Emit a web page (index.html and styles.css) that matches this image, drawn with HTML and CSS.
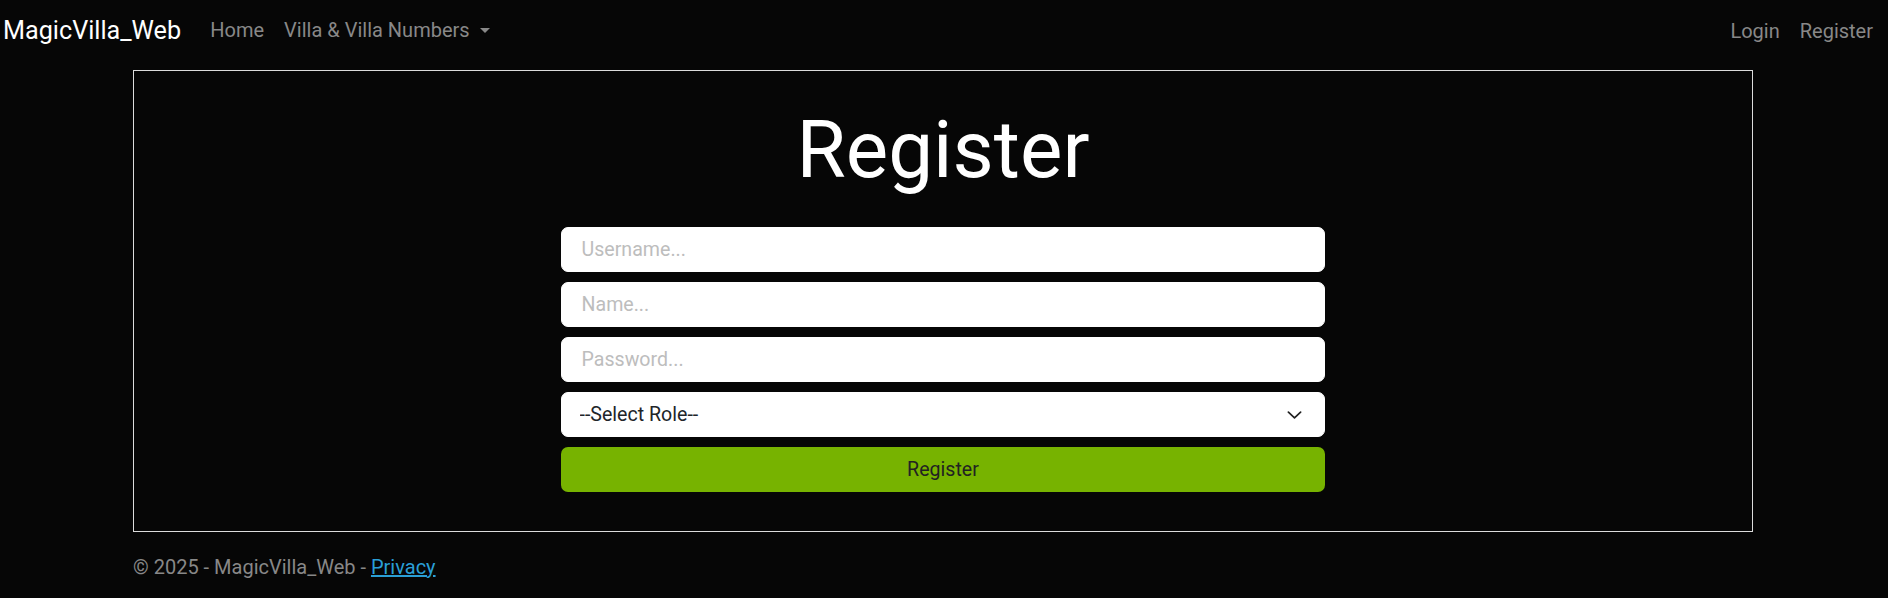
FILE: index.html
```html
<!DOCTYPE html>
<html lang="en">
<head>
<meta charset="utf-8">
<title>Register - MagicVilla_Web</title>
<link rel="stylesheet" href="styles.css">
</head>
<body>
<header class="navbar">
  <div class="nav-left">
    <a class="brand" href="#">MagicVilla_Web</a>
    <a class="nav-link" href="#">Home</a>
    <a class="nav-link dropdown" href="#">Villa &amp; Villa Numbers<span class="caret"></span></a>
  </div>
  <div class="nav-right">
    <a class="nav-link" href="#">Login</a>
    <a class="nav-link" href="#">Register</a>
  </div>
</header>
<main class="panel">
  <h1 class="title">Register</h1>
  <form class="form">
    <input class="field" type="text" placeholder="Username...">
    <input class="field" type="text" placeholder="Name...">
    <input class="field" type="password" placeholder="Password...">
    <select class="field select">
      <option>--Select Role--</option>
      <option>Admin</option>
      <option>Customer</option>
    </select>
    <button class="btn" type="button">Register</button>
  </form>
</main>
<footer class="footer">
  &copy; 2025 - MagicVilla_Web - <a href="#" class="privacy">Privacy</a>
</footer>
</body>
</html>
```
FILE: styles.css
```css
* { box-sizing: border-box; }
html, body { margin: 0; padding: 0; }
body {
  background: #060606;
  color: #888;
  font-family: Roboto, "Liberation Sans", sans-serif;
  font-size: 20px;
  line-height: 1.5;
  width: 1888px;
  height: 598px;
  overflow: hidden;
}
a { text-decoration: none; }

.navbar {
  height: 58px;
  display: flex;
  align-items: center;
  justify-content: space-between;
  padding: 3px 5px 0 3px;
}
.nav-left, .nav-right { display: flex; align-items: center; }
.brand {
  color: #fff;
  font-size: 25.2px;
  margin-right: 19.2px;
}
.nav-link {
  color: #888;
  padding: 0 10px;
  display: flex;
  align-items: center;
}
.caret {
  display: inline-block;
  width: 0;
  height: 0;
  margin-left: 10px;
  border-top: 5.8px solid #888;
  border-left: 5.8px solid transparent;
  border-right: 5.8px solid transparent;
}

.panel {
  width: 1620px;
  margin: 12px 0 0 133px;
  border: 1px solid #dcdcdc;
  padding: 31px 0 39px;
  display: flex;
  flex-direction: column;
  align-items: center;
}
.title {
  margin: 0 0 29px;
  font-size: 80px;
  font-weight: 400;
  line-height: 1.2;
  color: #fff;
}
.form {
  width: 764px;
  display: flex;
  flex-direction: column;
  gap: 10px;
}
.field {
  height: 45px;
  width: 100%;
  border: 1px solid #fff;
  border-radius: 7px;
  background: #fff;
  color: #212529;
  font-family: inherit;
  font-size: 19.6px;
  padding: 0 20px 0 19.5px;
  outline: none;
}
.field::placeholder { color: #bdbdbd; }
.select {
  appearance: none;
  -webkit-appearance: none;
  padding-left: 17.5px;
  background-image: url("data:image/svg+xml,%3csvg xmlns='http://www.w3.org/2000/svg' viewBox='0 0 16 8'%3e%3cpath fill='none' stroke='%23222' stroke-width='1.8' stroke-linecap='round' stroke-linejoin='round' d='M1.5 1l6.5 6 6.5-6'/%3e%3c/svg%3e");
  background-repeat: no-repeat;
  background-position: right 22px center;
  background-size: 15px 8px;
}
.btn {
  height: 45px;
  width: 100%;
  border: none;
  border-radius: 7px;
  background: #77b300;
  color: #222;
  font-family: inherit;
  font-size: 19.6px;
  cursor: pointer;
}

.footer {
  margin: 20px 0 0 133px;
  line-height: 1.5;
}
.privacy {
  color: #2a9fd6;
  text-decoration: underline;
}
```
